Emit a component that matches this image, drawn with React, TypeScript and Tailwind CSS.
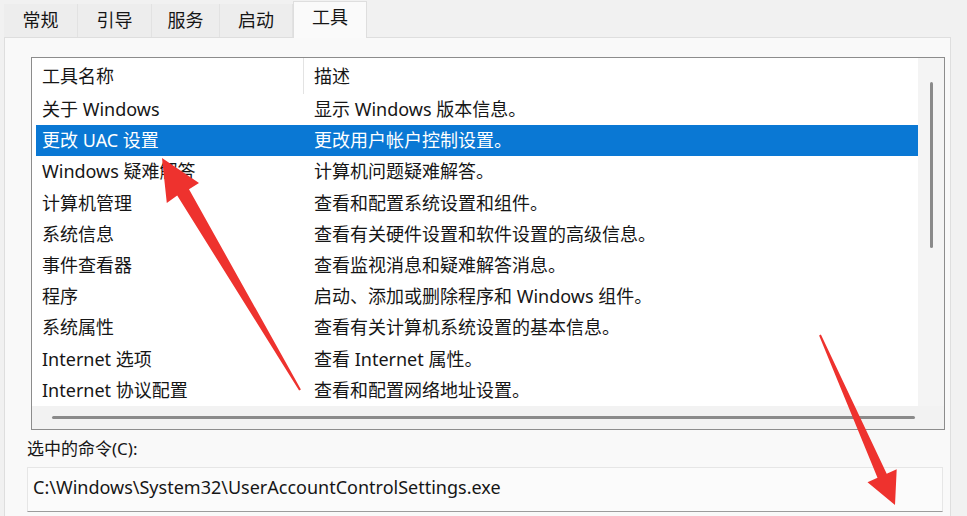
import React from "react";

const tabs = [
  { name: "常规", w: "w-[74px]" },
  { name: "引导", w: "w-[74px]" },
  { name: "服务", w: "w-[68px]" },
  { name: "启动", w: "w-[73px]" },
];

const tools = [
  { name: "关于 Windows", desc: "显示 Windows 版本信息。" },
  { name: "更改 UAC 设置", desc: "更改用户帐户控制设置。", selected: true },
  { name: "Windows 疑难解答", desc: "计算机问题疑难解答。" },
  { name: "计算机管理", desc: "查看和配置系统设置和组件。" },
  { name: "系统信息", desc: "查看有关硬件设置和软件设置的高级信息。" },
  { name: "事件查看器", desc: "查看监视消息和疑难解答消息。" },
  { name: "程序", desc: "启动、添加或删除程序和 Windows 组件。" },
  { name: "系统属性", desc: "查看有关计算机系统设置的基本信息。" },
  { name: "Internet 选项", desc: "查看 Internet 属性。" },
  { name: "Internet 协议配置", desc: "查看和配置网络地址设置。" },
];

export default function App() {
  return (
    <div className="relative w-[967px] h-[516px] overflow-hidden bg-[#f1f1f1] text-[#161616] font-['Noto_Sans','Noto_Sans_CJK_SC',sans-serif]">
      {/* Tab strip */}
      <div className="flex items-end h-[37px] pl-[4px]">
        {tabs.map((t) => (
          <div
            key={t.name}
            className={`${t.w} h-[33px] flex items-center justify-center text-[18px] bg-[#ededed] border-r border-[#e2e2e2]`}
          >
            {t.name}
          </div>
        ))}
        <div className="w-[74px] h-[37px] flex items-center justify-center text-[18px] bg-[#fafafa] border-x border-t border-[#dedede] relative top-[1px] pb-[6px]">
          工具
        </div>
      </div>

      {/* Panel */}
      <div className="ml-[4px] w-[947px] h-[480px] bg-[#f9f9f9] border border-[#dedede] pt-[19px]">
        {/* List view */}
        <div className="ml-[26px] w-[914px] h-[373px] bg-white border border-[#8c8c8c] flex flex-col">
          <div className="flex flex-1 min-h-0">
            <div className="flex-1 flex flex-col pl-[4px]">
              {/* Header */}
              <div className="flex h-[36px] items-center text-[18px]">
                <div className="w-[268px] pl-[6px] h-full flex items-center border-r border-[#e3e3e3]">
                  工具名称
                </div>
                <div className="pl-[10px]">描述</div>
              </div>
              {tools.map((r) => (
                <div
                  key={r.name}
                  className={`flex h-[31.2px] items-center text-[18px] ${
                    r.selected ? "bg-[#0a78d4] text-white" : ""
                  }`}
                >
                  <div className="w-[268px] pl-[6px] whitespace-nowrap">{r.name}</div>
                  <div className="pl-[10px] whitespace-nowrap">{r.desc}</div>
                </div>
              ))}
            </div>
            {/* Vertical scrollbar */}
            <div className="w-[26px] bg-[#f4f4f4] pt-[24px] flex justify-center">
              <div className="w-[3px] h-[166px] rounded-full bg-[#8a8a8a]" />
            </div>
          </div>
          {/* Horizontal scrollbar */}
          <div className="h-[23px] bg-[#f2f2f2] flex items-center pl-[20px]">
            <div className="w-[863px] h-[3px] rounded-full bg-[#8a8a8a]" />
          </div>
        </div>

        <div className="ml-[22px] mt-[8px] text-[17px] leading-[22px]">选中的命令(C):</div>
        <div className="ml-[22px] mt-[7px] w-[916px] h-[45px] bg-[#fbfbfb] border border-[#e6e6e6] border-b-[#9c9c9c] flex items-center pl-[5px] pb-[4px] text-[18px]">
          C:\Windows\System32\UserAccountControlSettings.exe
        </div>
      </div>

      {/* Annotation arrows */}
      <svg className="absolute left-0 top-0 pointer-events-none" width="967" height="516">
        <polygon
          points="162,158 199,183 189,189.3 300.9,389.5 299.1,390.5 177.2,195.5 166.8,203"
          fill="#ee322e"
        />
        <polygon
          points="895,505 867.5,482.2 877.5,477.7 819.1,335.4 820.9,334.6 886.7,473.7 896.7,469.2"
          fill="#ee322e"
        />
      </svg>
    </div>
  );
}
